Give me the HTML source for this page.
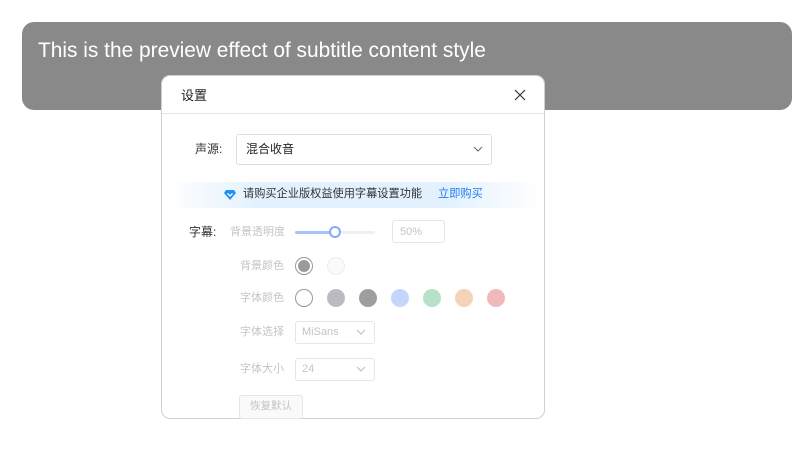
<!DOCTYPE html><html><head><meta charset="utf-8"><style>
*{margin:0;padding:0;box-sizing:border-box}
body{width:800px;height:453px;background:#fff;position:relative;overflow:hidden;font-family:"Liberation Sans","Noto Sans CJK SC",sans-serif;line-height:1}
.a{position:absolute}
.t{font-size:11px;color:#c4c4c4;white-space:nowrap}
.c{position:absolute;width:18px;height:18px;border-radius:50%}
.sel{position:absolute;border:1px solid #e6e6e6;border-radius:3px;background:#fff}
</style></head><body>
<div class="a" style="left:22px;top:22px;width:770px;height:88px;background:#898989;border-radius:12px"></div>
<div class="a" style="left:38px;top:41px;color:#fff;font-size:20.9px;white-space:nowrap">This is the preview effect of subtitle content style</div>
<div class="a" style="left:161px;top:75px;width:384px;height:344px;background:#fff;border:1px solid #d0d0d0;border-radius:9px"></div>
<div class="a" style="left:162px;top:113px;width:382px;height:1px;background:#e6e6e6"></div>
<div class="a" style="left:181px;top:89px;font-size:13px;color:#222">设置</div>
<svg class="a" style="left:514px;top:89px" width="12" height="12"><path d="M1 1L11 11M11 1L1 11" stroke="#333" stroke-width="1.2"/></svg>
<div class="a" style="left:195px;top:143px;font-size:12px;color:#333">声源:</div>
<div class="sel" style="left:236px;top:134px;width:256px;height:31px;border-color:#ddd"></div>
<div class="a" style="left:246px;top:143px;font-size:12px;color:#222">混合收音</div>
<svg class="a" style="left:473px;top:146px" width="10" height="7"><path d="M1 1L5 5L9 1" stroke="#666" fill="none"/></svg>
<div class="a" style="left:166px;top:182px;width:374px;height:26px;background:linear-gradient(90deg,rgba(225,240,255,0),#e3f1fe 25%,#e3f1fe 75%,rgba(225,240,255,0))"></div>
<svg class="a" style="left:224px;top:190px" width="12" height="10"><path d="M2 0H10L12 3L6 10L0 3Z" fill="#1e90f5"/><path d="M3.5 3.5L6 6L8.5 3.5" stroke="#fff" stroke-width="1.3" fill="none"/></svg>
<div class="a" style="left:243px;top:189px;font-size:11.2px;color:#333;white-space:nowrap">请购买企业版权益使用字幕设置功能</div>
<div class="a" style="left:438px;top:189px;font-size:11.2px;color:#1e7cf2;white-space:nowrap">立即购买</div>
<div class="a" style="left:189px;top:226px;font-size:12px;color:#333">字幕:</div>
<div class="a t" style="left:230px;top:227px">背景透明度</div>
<div class="a" style="left:295px;top:231px;width:80px;height:3px;background:#f0f0f0;border-radius:2px"></div>
<div class="a" style="left:295px;top:231px;width:40px;height:3px;background:#a6c2fb;border-radius:2px"></div>
<div class="a" style="left:329px;top:226px;width:12px;height:12px;border-radius:50%;border:2px solid #87a9f7;background:#fff"></div>
<div class="sel" style="left:392px;top:220px;width:53px;height:23px"></div>
<div class="a t" style="left:400px;top:227px;font-size:11px">50%</div>
<div class="a t" style="left:240px;top:261px">背景颜色</div>
<div class="c" style="left:295px;top:257px;border:1.5px solid #999;background:#fff"></div>
<div class="c" style="left:298px;top:260px;width:12px;height:12px;background:#9a9a9a"></div>
<div class="c" style="left:327px;top:257px;border:1px solid #eee;background:#fafafa"></div>
<div class="a t" style="left:240px;top:293px">字体颜色</div>
<div class="c" style="left:295px;top:289px;border:1.5px solid #999;background:#fff"></div>
<div class="c" style="left:327px;top:289px;background:#bbbcbf"></div>
<div class="c" style="left:359px;top:289px;background:#9e9e9e"></div>
<div class="c" style="left:391px;top:289px;background:#c6d6fb"></div>
<div class="c" style="left:423px;top:289px;background:#b5e2c8"></div>
<div class="c" style="left:455px;top:289px;background:#f5d3b6"></div>
<div class="c" style="left:487px;top:289px;background:#f2b9bd"></div>
<div class="a t" style="left:240px;top:327px">字体选择</div>
<div class="sel" style="left:295px;top:321px;width:80px;height:23px"></div>
<div class="a t" style="left:302px;top:327px;font-size:11px">MiSans</div>
<svg class="a" style="left:356px;top:329px" width="10" height="7"><path d="M1 1L5 5L9 1" stroke="#bbb" fill="none"/></svg>
<div class="a t" style="left:240px;top:364px">字体大小</div>
<div class="sel" style="left:295px;top:358px;width:80px;height:23px"></div>
<div class="a t" style="left:302px;top:364px;font-size:11px">24</div>
<svg class="a" style="left:356px;top:366px" width="10" height="7"><path d="M1 1L5 5L9 1" stroke="#bbb" fill="none"/></svg>
<div class="sel" style="left:239px;top:395px;width:64px;height:24px;background:#fafafa"></div>
<div class="a t" style="left:250px;top:401px;font-size:10.5px">恢复默认</div>
</body></html>
